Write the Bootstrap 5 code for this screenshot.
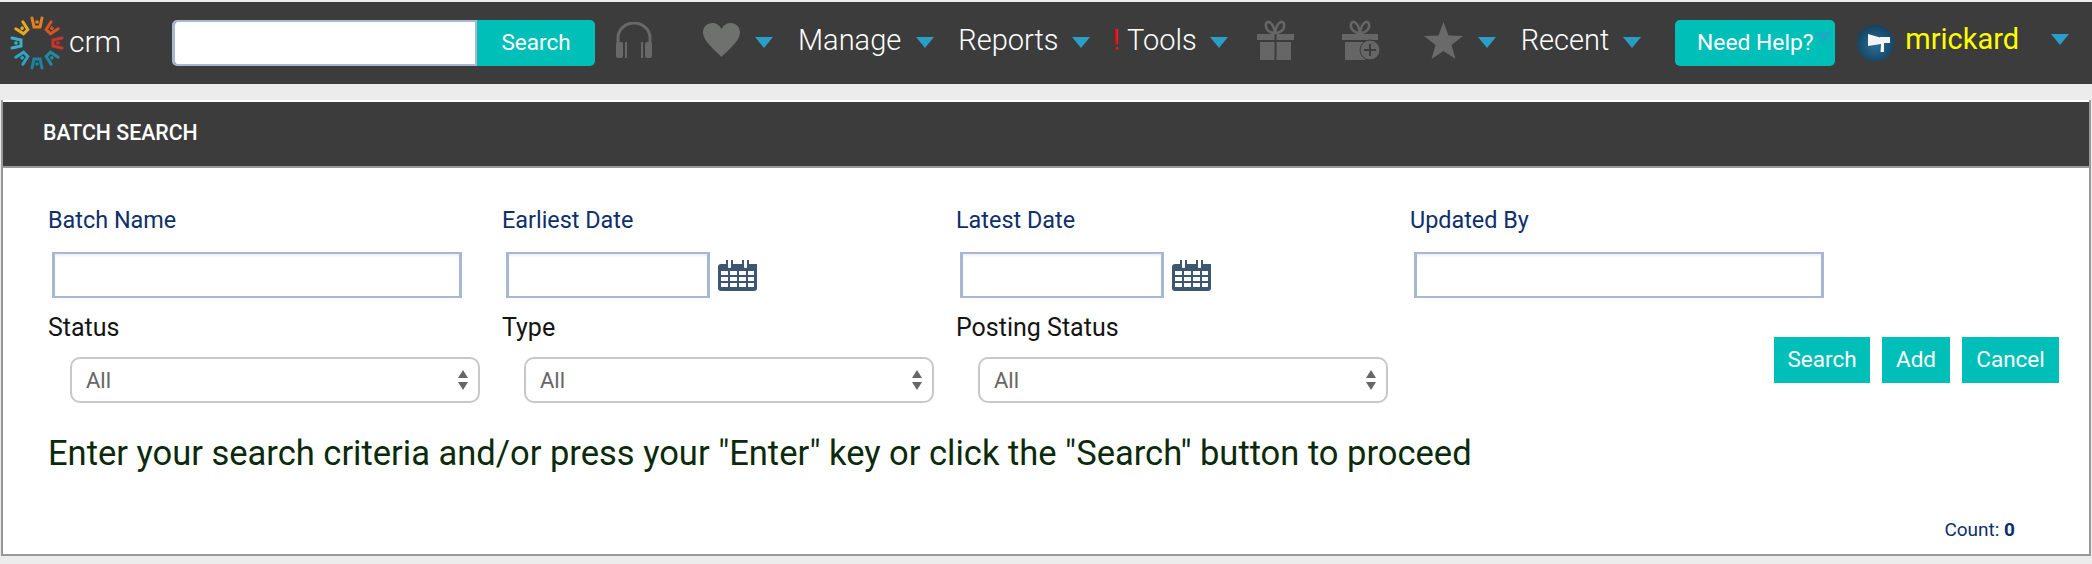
<!DOCTYPE html>
<html lang="en">
<head>
    <meta charset="UTF-8">
    <meta name="viewport" content="width=device-width, initial-scale=1.0">
    <title>Batch Search</title>
    <link href="https://cdn.jsdelivr.net/npm/bootstrap@5.3.3/dist/css/bootstrap.min.css" rel="stylesheet">
    <style>
        body { background: #ececec; font-family: Roboto, "Liberation Sans", sans-serif; overflow: hidden; height: 564px; padding-top: 2px; }
        .top-bar { background: #3c3c3c; height: 82px; padding: 0; flex-wrap: nowrap; justify-content: flex-start; align-items: flex-start; }
        .logo-box { width: 172px; height: 82px; position: relative; flex: none; }
        .logo-box svg { position: absolute; left: 9px; top: 13px; }
        .logo-word { position: absolute; left: 69px; top: 20px; color: #fff; font-size: 30px; font-weight: 300; line-height: 40px; }
        .top-search { width: 424px; height: 46px; margin-top: 18px; flex: none; flex-wrap: nowrap; }
        .top-search .form-control { width: 306px; flex: none; height: 46px; border: solid #a9b8d2; border-width: 2px 3px; border-radius: 5px 0 0 5px; }
        .teal-btn { background: #00bfb8; border: 0; color: #fff; border-radius: 0; padding: 0; font-weight: 400; }
        .teal-btn:hover { background: #00bfb8; color: #fff; }
        .top-search .teal-btn { width: 118px; height: 46px; font-size: 22.5px; border-radius: 0 5px 5px 0; }
        .nav-group { display: flex; align-items: center; height: 76px; flex: none; }
        .nav-word { color: #fff; font-size: 29px; font-weight: 300; line-height: 40px; text-decoration: none; white-space: nowrap; }
        .nav-flag { color: #f01010; font-size: 29px; font-weight: 400; margin-right: 7px; line-height: 40px; }
        .nav-caret { width: 0; height: 0; border-left: 9px solid transparent; border-right: 9px solid transparent; border-top: 11px solid #2a9ec6; margin-left: 15px; margin-top: 5px; flex: none; }
        .caret-near .nav-caret { margin-left: 13px; }
        .caret-mid .nav-caret { margin-left: 14px; }
        .gap-headset { margin-left: 20px; }
        .gap-heart { margin-left: 51px; }
        .gap-item { margin-left: 25px; }
        .gap-reports { margin-left: 24px; }
        .gap-tools { margin-left: 23px; }
        .gap-gift { margin-left: 29px; }
        .gap-plus { margin-left: 48px; }
        .gap-star { margin-left: 44px; }
        .help-btn { position: relative; width: 160px; height: 46px; margin: 18px 0 0 34px; font-size: 22.8px; border-radius: 5px; flex: none; }
        .help-btn .nav-caret { position: absolute; left: 139px; top: 12px; margin: 0; opacity: .55; }
        .user-box { display: flex; align-items: flex-start; margin-left: 22px; flex: none; }
        .user-box svg { margin-top: 23px; }
        .user-name { color: #ff0; font-size: 29px; line-height: 40px; margin: 17px 0 0 11px; font-weight: 400; width: 112px; white-space: nowrap; }
        .user-box .nav-caret { margin: 32px 0 0 34px; }

        .batch-card { margin: 16px 1px 0 1px; height: 456px; border: 2px solid #999; border-top: 0; border-radius: 0; background: #fff; padding-top: 2px; }
        .batch-head { flex: none; background: #3c3c3c; color: #fff; height: 66px; margin: 0; padding: 0 0 0 40px; border: 0; border-bottom: 2px solid #999; border-radius: 0 !important; font-size: 21.3px; font-weight: 500; line-height: 62px; }
        .batch-body { padding: 37px 0 0 45px; }
        .field-row { --bs-gutter-x: 0; width: 2011px; margin: 0; flex-wrap: nowrap; }
        .field-col { width: 454px; flex: none; }
        .field-label { display: block; margin: 0; font-size: 23.4px; line-height: 30px; color: #0d2f6b; white-space: nowrap; }
        .field-label.plain { color: #141414; font-size: 25px; }
        .box-input { border: solid #a9b8d2; border-width: 2px 3px; border-radius: 0; height: 46px; box-shadow: inset 0 2px 2px rgba(0,0,0,.06); margin: 17px 0 0 4px; width: 410px; padding: 0 8px; }
        .box-input.short { width: 204px; }
        .date-line { display: flex; align-items: flex-start; }
        .date-line svg { margin: 25px 0 0 8px; }
        .row-two { margin-top: 15px; }
        .box-select { width: 410px; height: 46px; margin: 14px 0 0 22px; border: 2px solid #c8c8c8; border-radius: 10px; color: #666; font-size: 22px; padding: 0 30px 0 14px; background-size: 10px 22px; background-position: right 10px center; background-image: url("data:image/svg+xml,%3Csvg xmlns='http://www.w3.org/2000/svg' viewBox='0 0 10 22'%3E%3Cpath fill='%23666' d='M5 1l5 8H0zM5 21L0 13h10z'/%3E%3C/svg%3E"); }
        .action-box { display: flex; gap: 12px; padding: 24px 0 0 0; margin-left: auto; flex: none; width: auto; }
        .action-box .teal-btn { height: 46px; font-size: 22.5px; }
        .act-search { width: 96px; }
        .act-add { width: 68px; }
        .act-cancel { width: 97px; }
        .search-hint { margin: 28px 0 0 0; font-size: 34.5px; line-height: 44px; color: #0b2a0b; white-space: nowrap; }
        .count-line { margin: 43px 0 0 0; width: 1967px; text-align: right; font-size: 19px; line-height: 24px; color: #0d2f6b; }
    </style>
</head>
<body>
    <!-- top menu -->
    <nav class="navbar top-bar">
        <div class="logo-box">
            <svg width="56" height="56" viewBox="-28 -28 56 56">
                <defs>
                    <g id="logo-person">
                        <path fill="none" stroke="currentColor" stroke-width="3" stroke-linecap="round" d="M-5 -5L-3 4H3L5 -5"/>
                        <circle cy="-1" r="1.800" fill="currentColor"/>
                    </g>
                </defs>
                <use href="#logo-person" color="#e8a820" transform="rotate(-45) translate(0 -20)"/>
                <use href="#logo-person" color="#e5801f" transform="translate(0 -20)"/>
                <use href="#logo-person" color="#d9541f" transform="rotate(45) translate(0 -20)"/>
                <use href="#logo-person" color="#c9352a" transform="rotate(90) translate(0 -20)"/>
                <use href="#logo-person" color="#1f8aa6" transform="rotate(135) translate(0 -20)"/>
                <use href="#logo-person" color="#1c83a3" transform="rotate(180) translate(0 -20)"/>
                <use href="#logo-person" color="#2aa6c6" transform="rotate(225) translate(0 -20)"/>
                <use href="#logo-person" color="#3cb0c8" transform="rotate(270) translate(0 -20)"/>
            </svg>
            <span class="logo-word">crm</span>
        </div>
        <div class="input-group top-search">
            <input type="text" class="form-control" aria-label="Search">
            <button class="btn teal-btn">Search</button>
        </div>

        <div class="nav-group gap-headset">
            <svg width="36" height="36" viewBox="0 0 36 36"><path fill="none" stroke="#686868" stroke-width="3" d="M2 24V16a16 15 0 0 1 32 0v8"/><rect x="0" y="20" width="7" height="16" rx="2" fill="#686868"/><rect x="29" y="20" width="7" height="16" rx="2" fill="#686868"/><rect x="9" y="20" width="2" height="16" fill="#686868"/><rect x="25" y="20" width="2" height="16" fill="#686868"/></svg>
        </div>
        <div class="nav-group gap-heart">
            <svg width="37" height="34" viewBox="0 0 37 34"><path fill="#6e716e" d="M18.5 34C12 27 0 18 0 9.500 0 4 4 0 9.500 0c4 0 7 2.500 9 6 2-3.500 5-6 9-6C33 0 37 4 37 9.500 37 18 25 27 18.500 34z"/></svg>
            <span class="nav-caret"></span>
        </div>
        <div class="nav-group gap-item"><a class="nav-word" href="#">Manage</a><span class="nav-caret"></span></div>
        <div class="nav-group gap-reports caret-near"><a class="nav-word" href="#">Reports</a><span class="nav-caret"></span></div>
        <div class="nav-group gap-tools caret-near"><span class="nav-flag">!</span><a class="nav-word" href="#">Tools</a><span class="nav-caret"></span></div>
        <div class="nav-group gap-gift">
            <svg width="37" height="40" viewBox="0 0 37 40"><g fill="#666"><rect x="0" y="14" width="17.500" height="6"/><rect x="19.500" y="14" width="17.500" height="6"/><rect x="3" y="22" width="14.500" height="18"/><rect x="19.500" y="22" width="14.500" height="18"/></g><path fill="none" stroke="#666" stroke-width="2.500" d="M18 13C12 13 8 9 9 4c1-4 7-3 9 9 2-12 8-13 9-9 1 5-3 9-9 9z"/></svg>
        </div>
        <div class="nav-group gap-plus">
            <svg width="38" height="40" viewBox="0 0 38 40"><g fill="#666"><rect x="0" y="14" width="36" height="6"/><rect x="3" y="22" width="20" height="18"/></g><path fill="none" stroke="#666" stroke-width="2.500" d="M18 13C12 13 8 9 9 4c1-4 7-3 9 9 2-12 8-13 9-9 1 5-3 9-9 9z"/><circle cx="28" cy="30" r="10" fill="#666" stroke="#3c3c3c"/><path stroke="#3c3c3c" stroke-width="2" d="M28 24v12M22 30h12"/></svg>
        </div>
        <div class="nav-group gap-star">
            <svg width="39" height="37" viewBox="0 0 39 37"><path fill="#6a6a6a" d="M19.500 0l5 13.500 14.500.5-11.500 9 4 14-12-8-12 8 4-14L0 14l14.500-.5z"/></svg>
            <span class="nav-caret"></span>
        </div>
        <div class="nav-group gap-item caret-mid"><a class="nav-word" href="#">Recent</a><span class="nav-caret"></span></div>
        <button class="btn teal-btn help-btn">Need Help?<span class="nav-caret"></span></button>
        <div class="user-box">
            <svg width="37" height="36" viewBox="0 0 37 36">
                <defs><radialGradient id="avatar-fill" cx="50%" cy="55%" r="55%"><stop offset="0" stop-color="#2a6f99"/><stop offset="1" stop-color="#14425f"/></radialGradient></defs>
                <ellipse cx="18.500" cy="18" rx="18.500" ry="18" fill="url(#avatar-fill)"/>
                <path fill="#f4f4f4" d="M11 9L23 12.500V12H33V18H27L27 27H23.500L24 19L11 21z"/>
            </svg>
            <span class="user-name">mrickard</span>
            <span class="nav-caret"></span>
        </div>
    </nav>

    <!-- batch search panel -->
    <div class="card batch-card">
        <div class="card-header batch-head">BATCH SEARCH</div>
        <div class="card-body batch-body">
            <div class="row field-row">
                <div class="field-col">
                    <label class="field-label">Batch Name</label>
                    <input type="text" class="form-control box-input">
                </div>
                <div class="field-col">
                    <label class="field-label">Earliest Date</label>
                    <div class="date-line">
                        <input type="text" class="form-control box-input short">
                        <svg width="39" height="31" viewBox="0 0 39 31"><use href="#cal-icon"/></svg>
                    </div>
                </div>
                <div class="field-col">
                    <label class="field-label">Latest Date</label>
                    <div class="date-line">
                        <input type="text" class="form-control box-input short">
                        <svg width="39" height="31" viewBox="0 0 39 31"><use href="#cal-icon"/></svg>
                    </div>
                </div>
                <div class="field-col">
                    <label class="field-label">Updated By</label>
                    <input type="text" class="form-control box-input">
                </div>
            </div>
            <div class="row field-row row-two">
                <div class="field-col">
                    <label class="field-label plain">Status</label>
                    <select class="form-select box-select"><option>All</option></select>
                </div>
                <div class="field-col">
                    <label class="field-label plain">Type</label>
                    <select class="form-select box-select"><option>All</option></select>
                </div>
                <div class="field-col">
                    <label class="field-label plain">Posting Status</label>
                    <select class="form-select box-select"><option>All</option></select>
                </div>
                <div class="action-box">
                    <button class="btn teal-btn act-search">Search</button>
                    <button class="btn teal-btn act-add">Add</button>
                    <button class="btn teal-btn act-cancel">Cancel</button>
                </div>
            </div>
            <p class="search-hint">Enter your search criteria and/or press your "Enter" key or click the "Search" button to proceed</p>
            <p class="count-line">Count: <b>0</b></p>
        </div>
    </div>

    <svg width="0" height="0" class="d-block">
        <symbol id="cal-icon" viewBox="0 0 39 31">
            <path fill="#3d5672" d="M3 4h36v24a3 3 0 0 1-3 3H3a3 3 0 0 1-3-3V7a3 3 0 0 1 3-3z"/>
            <g fill="#fff"><rect x="3" y="11" width="7" height="4"/><rect x="12" y="11" width="7" height="4"/><rect x="21" y="11" width="7" height="4"/><rect x="30" y="11" width="6" height="4"/><rect x="3" y="17" width="7" height="4"/><rect x="12" y="17" width="7" height="4"/><rect x="21" y="17" width="7" height="4"/><rect x="30" y="17" width="6" height="4"/><rect x="3" y="23" width="7" height="4"/><rect x="12" y="23" width="7" height="4"/><rect x="21" y="23" width="7" height="4"/><rect x="30" y="23" width="6" height="4"/><rect x="10" y="3" width="3" height="5"/><rect x="26" y="3" width="3" height="5"/></g>
            <path fill="none" stroke="#3d5672" stroke-width="2" d="M9 0v7a2.500 2.500 0 0 0 5 0V0M25 0v7a2.500 2.500 0 0 0 5 0V0"/>
        </symbol>
    </svg>

    <script src="https://cdn.jsdelivr.net/npm/bootstrap@5.3.3/dist/js/bootstrap.bundle.min.js"></script>
</body>
</html>
